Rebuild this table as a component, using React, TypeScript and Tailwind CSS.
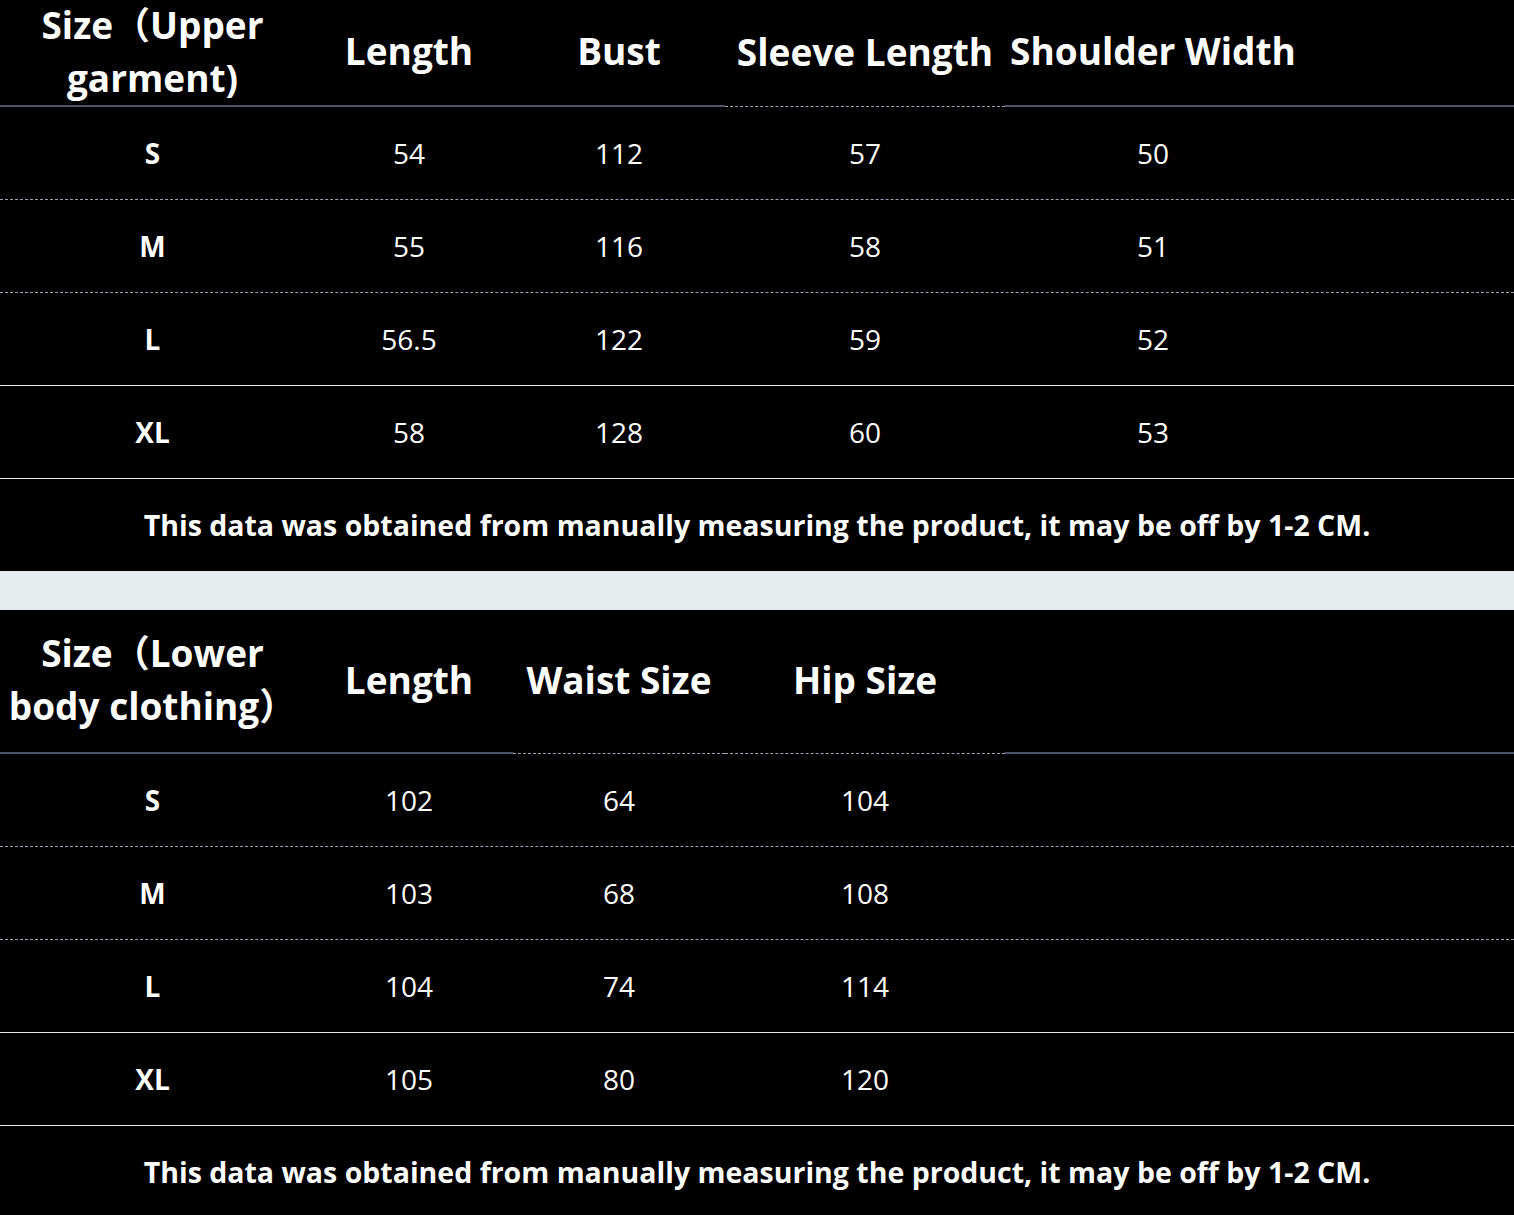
import React from "react";

const font = { fontFamily: '"Open Sans", "Noto Sans CJK SC", sans-serif' };

type Col = { w: string; head: string; dashed: boolean };

const upperCols: Col[] = [
  { w: "w-[305px]", head: "Size（Upper garment)", dashed: false },
  { w: "w-[208px]", head: "Length", dashed: false },
  { w: "w-[212px]", head: "Bust", dashed: false },
  { w: "w-[280px]", head: "Sleeve Length", dashed: true },
  { w: "w-[296px]", head: "Shoulder Width", dashed: false },
  { w: "flex-1", head: "", dashed: false },
];

const lowerCols: Col[] = [
  { w: "w-[305px]", head: "Size（Lower body clothing）", dashed: false },
  { w: "w-[208px]", head: "Length", dashed: false },
  { w: "w-[212px]", head: "Waist Size", dashed: true },
  { w: "w-[280px]", head: "Hip Size", dashed: true },
  { w: "w-[296px]", head: "", dashed: false },
  { w: "flex-1", head: "", dashed: false },
];

const upperRows = [
  ["S", "54", "112", "57", "50"],
  ["M", "55", "116", "58", "51"],
  ["L", "56.5", "122", "59", "52"],
  ["XL", "58", "128", "60", "53"],
];

const lowerRows = [
  ["S", "102", "64", "104"],
  ["M", "103", "68", "108"],
  ["L", "104", "74", "114"],
  ["XL", "105", "80", "120"],
];

const note = "This data was obtained from manually measuring the product, it may be off by 1-2 CM.";

const SizeTable = ({ cols, rows, headH }: { cols: Col[]; rows: string[][]; headH: string }) => (
  <div className="bg-black text-white">
    {/* header */}
    <div className={`flex ${headH}`}>
      {cols.map((c, i) => (
        <div
          key={i}
          className={`${c.w} flex items-center justify-center text-center px-1 pb-1 text-[37px] font-bold leading-[53px] ${
            c.dashed ? "border-b border-dashed border-[#9ca3af]" : "border-b-2 border-[#4b5565]"
          }`}
        >
          {c.head}
        </div>
      ))}
    </div>
    {/* body */}
    {rows.map((r, ri) => (
      <div
        key={ri}
        className={`flex h-[93px] border-b ${ri < 2 ? "border-dashed border-[#9ca3af]" : "border-[#e5e7eb]"}`}
      >
        {cols.map((c, i) => (
          <div
            key={i}
            className={`${c.w} flex items-center justify-center text-[28px] ${i === 0 ? "font-bold" : ""}`}
          >
            {r[i] ?? ""}
          </div>
        ))}
      </div>
    ))}
    <div className="h-[92px] flex items-center justify-center text-[28.5px] font-bold">{note}</div>
  </div>
);

export default function App() {
  return (
    <div className="w-[1514px] h-[1215px] overflow-hidden bg-black" style={font}>
      <SizeTable cols={upperCols} rows={upperRows} headH="h-[107px]" />
      <div className="h-[39px] bg-[#e6ecee]" />
      <SizeTable cols={lowerCols} rows={lowerRows} headH="h-[144px]" />
    </div>
  );
}
